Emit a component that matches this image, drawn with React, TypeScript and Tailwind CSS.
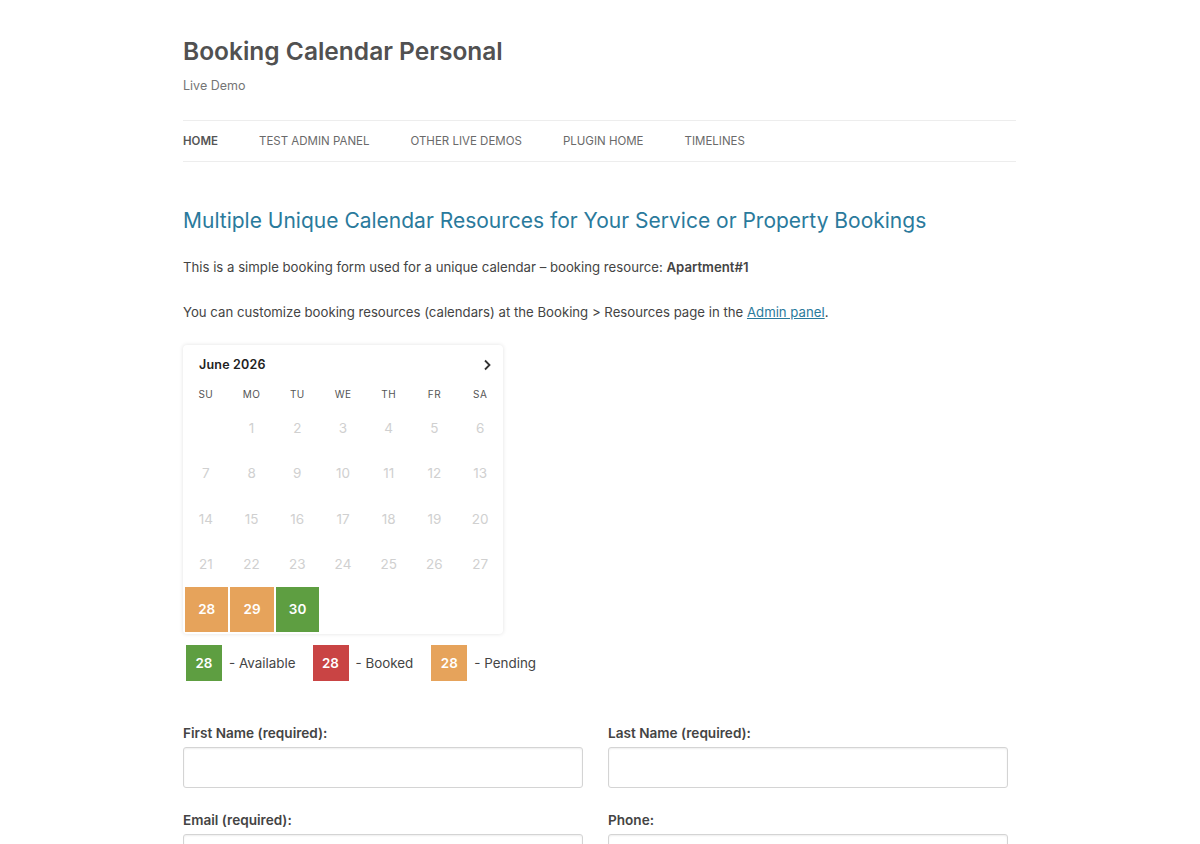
import React from "react";

const days: (number | null)[][] = [
  [null, 1, 2, 3, 4, 5, 6],
  [7, 8, 9, 10, 11, 12, 13],
  [14, 15, 16, 17, 18, 19, 20],
  [21, 22, 23, 24, 25, 26, 27],
];

export default function App() {
  return (
    <div className="min-h-[844px] bg-white text-[#444]" style={{ fontFamily: "Inter, 'Noto Sans', sans-serif" }}>
      <div className="w-[833px] ml-[183px] pt-[34px]">
        <h1 className="text-[24.5px] leading-[34px] font-semibold text-[#515151]">Booking Calendar Personal</h1>
        <div className="mt-[10px] text-[12.5px] leading-[16px] text-[#757575]">Live Demo</div>
        <nav className="mt-[26px] border-t border-b border-[#ededed] h-[42px] flex items-center gap-[41px] text-[11.5px] uppercase text-[#6a6a6a] pt-[1px]">
          <span className="font-semibold text-[#555]">Home</span>
          <span>Test Admin Panel</span>
          <span>Other Live Demos</span>
          <span>Plugin Home</span>
          <span>Timelines</span>
        </nav>
        <h2 className="mt-[44px] text-[21px] leading-[30px] text-[#2a7a9c]">Multiple Unique Calendar Resources for Your Service or Property Bookings</h2>
        <p className="mt-[19px] text-[13.2px] leading-[24px]">
          This is a simple booking form used for a unique calendar – booking resource: <b className="font-semibold">Apartment#1</b>
        </p>
        <p className="mt-[21px] text-[13.2px] leading-[24px]">
          You can customize booking resources (calendars) at the Booking &gt; Resources page in the{" "}
          <a className="text-[#2a7a9c] underline">Admin panel</a>.
        </p>
        <div className="mt-[21px] w-[320px] rounded-[4px] bg-white shadow-[0_0_4px_rgba(0,0,0,0.12)] pb-[2px]">
          <div className="flex items-center justify-between h-[38px] pl-[16px] pr-[11px] pt-[2px]">
            <span className="text-[12.5px] font-semibold text-[#222] tracking-[0.2px]">June 2026</span>
            <svg width="10" height="12" viewBox="0 0 10 12"><path d="M3 1.5 L7.5 6 L3 10.5" fill="none" stroke="#333" strokeWidth="1.8" /></svg>
          </div>
          <div className="grid grid-cols-7 h-[22px] items-center text-[10px] text-[#555] text-center tracking-[0.4px]">
            {["SU", "MO", "TU", "WE", "TH", "FR", "SA"].map((d) => (
              <span key={d}>{d}</span>
            ))}
          </div>
          {days.map((row, i) => (
            <div key={i} className="grid grid-cols-7 h-[45.5px] items-center text-center text-[13.5px] text-[#d0d0d0]">
              {row.map((d, j) => (
                <span key={j}>{d ?? ""}</span>
              ))}
            </div>
          ))}
          <div className="grid grid-cols-7 h-[45px] px-[2px] gap-[2px] text-[13.5px] font-semibold text-white text-center">
            <div className="bg-[#e6a35b] flex items-center justify-center">28</div>
            <div className="bg-[#e6a35b] flex items-center justify-center">29</div>
            <div className="bg-[#5e9e41] flex items-center justify-center">30</div>
          </div>
        </div>
        <div className="mt-[11px] ml-[3px] flex items-center text-[13.4px] text-[#444]">
          <div className="w-[36px] h-[36px] bg-[#5e9e41] text-white font-semibold flex items-center justify-center">28</div>
          <span className="ml-[7px]">- Available</span>
          <div className="ml-[17px] w-[36px] h-[36px] bg-[#c94444] text-white font-semibold flex items-center justify-center">28</div>
          <span className="ml-[7px]">- Booked</span>
          <div className="ml-[18px] w-[36px] h-[36px] bg-[#e6a35b] text-white font-semibold flex items-center justify-center">28</div>
          <span className="ml-[7px]">- Pending</span>
        </div>
        <div className="mt-[42px] grid grid-cols-[400px_400px] gap-x-[25px] gap-y-[22px]">
          {["First Name (required):", "Last Name (required):", "Email (required):", "Phone:"].map((l) => (
            <div key={l}>
              <div className="text-[13.6px] leading-[20px] font-semibold text-[#444]">{l}</div>
              <div className="mt-[4px] h-[41px] rounded-[3px] border border-[#d4d4d4] shadow-[inset_0_1px_2px_rgba(0,0,0,0.07)]" />
            </div>
          ))}
        </div>
      </div>
    </div>
  );
}
